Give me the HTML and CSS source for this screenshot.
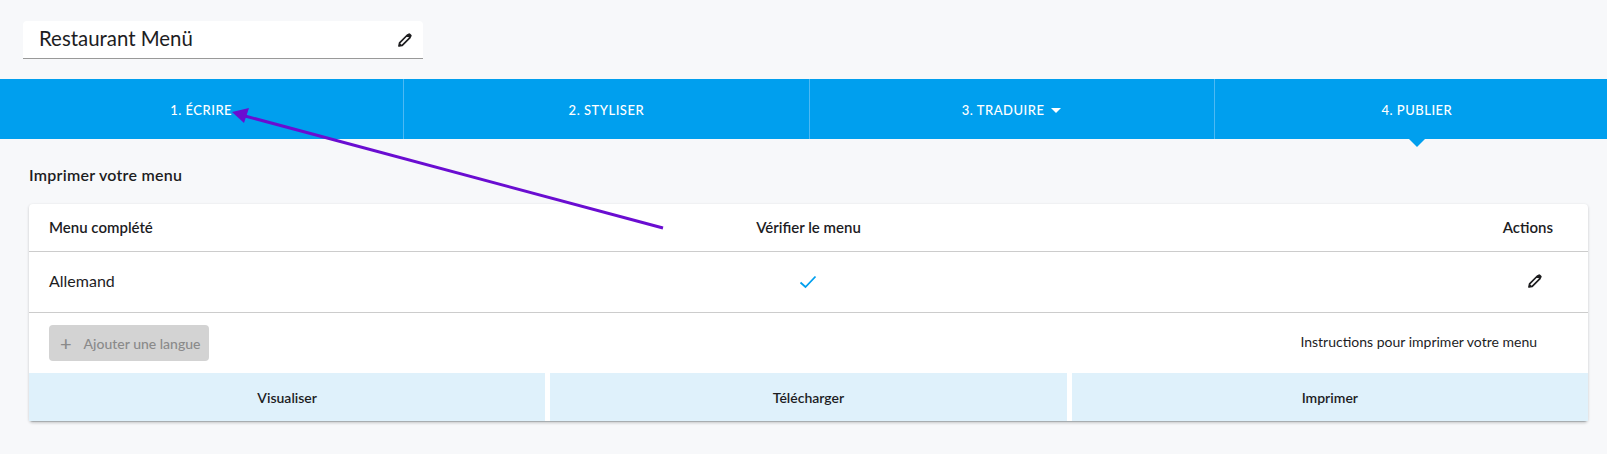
FILE: index.html
```html
<!DOCTYPE html>
<html lang="fr">
<head>
    <meta charset="UTF-8">
    <meta name="viewport" content="width=device-width, initial-scale=1.0">
    <title>Restaurant Menü</title>
    <link rel="stylesheet" href="styles.css">
</head>
<body>
    <div class="title-box">
        <span class="title-text">Restaurant Menü</span>
        <svg class="pencil" viewBox="0 0 14 14"><path d="M1 13l.6-3.2L9.4 2l2.6 2.6L4.2 12.4z" fill="#fff" stroke="#1d1d1f" stroke-width="1.7" stroke-linejoin="round"/><path d="M9.2 1.8l1-1a1.4 1.4 0 0 1 2 0l1 1a1.4 1.4 0 0 1 0 2l-1 1z" fill="#1d1d1f"/><path d="M.7 13.3l.7-3.6 2.9 2.9z" fill="#1d1d1f"/></svg>
    </div>

    <nav class="steps">
        <div class="step">1. ÉCRIRE</div>
        <div class="step">2. STYLISER</div>
        <div class="step">3. TRADUIRE<span class="caret"></span></div>
        <div class="step active">4. PUBLIER</div>
    </nav>

    <h2 class="section-title">Imprimer votre menu</h2>

    <div class="card">
        <div class="row row-head">
            <div class="col-left">Menu complété</div>
            <div class="col-mid">Vérifier le menu</div>
            <div class="col-right">Actions</div>
        </div>
        <div class="row row-lang">
            <div class="col-left">Allemand</div>
            <div class="col-mid">
                <svg class="check" viewBox="0 0 18 14"><path d="M1.5 7.5l5 4.5L16.5 1.5" fill="none" stroke="#009fee" stroke-width="1.8"/></svg>
            </div>
            <div class="col-right">
                <svg class="pencil" viewBox="0 0 14 14"><path d="M1 13l.6-3.2L9.4 2l2.6 2.6L4.2 12.4z" fill="#fff" stroke="#1d1d1f" stroke-width="1.7" stroke-linejoin="round"/><path d="M9.2 1.8l1-1a1.4 1.4 0 0 1 2 0l1 1a1.4 1.4 0 0 1 0 2l-1 1z" fill="#1d1d1f"/><path d="M.7 13.3l.7-3.6 2.9 2.9z" fill="#1d1d1f"/></svg>
            </div>
        </div>
        <div class="row row-tools">
            <button class="add-btn" disabled><span class="plus">+</span>Ajouter une langue</button>
            <span class="instructions">Instructions pour imprimer votre menu</span>
        </div>
        <div class="actions">
            <div class="action">Visualiser</div>
            <div class="action">Télécharger</div>
            <div class="action">Imprimer</div>
        </div>
    </div>

    <!-- annotation drawn over the page -->
    <svg class="annotation" width="700" height="240" viewBox="0 0 700 240">
        <path d="M663 228L245 116" stroke="#6a0dd1" stroke-width="3" fill="none"/>
        <path d="M232 112L249 108L244 123z" fill="#6a0dd1"/>
    </svg>
</body>
</html>
```

FILE: styles.css
```css
html, body {
    overflow: hidden;
}
body {
    margin: 0;
    height: 454px;
    background: #f7f8fa;
    color: #1d1d1f;
    font-family: 'Lato', 'Noto Sans', sans-serif;
    position: relative;
    padding-top: 21px;
    box-sizing: border-box;
}
.title-box {
    width: 400px;
    height: 38px;
    margin-left: 23px;
    padding: 0 11px 0 16px;
    box-sizing: border-box;
    display: flex;
    align-items: center;
    justify-content: space-between;
    background: #fff;
    border-bottom: 1px solid #999;
    border-radius: 4px 4px 0 0;
}
.title-text {
    font-size: 20.4px;
    margin-top: -4px;
}
.pencil {
    display: block;
    width: 14px;
    height: 14px;
}
.steps {
    display: flex;
    height: 60px;
    margin: 20px -12px 0 -1px;
    background: #009fee;
}
.step {
    flex: 1;
    display: flex;
    align-items: center;
    justify-content: center;
    position: relative;
    padding-top: 2px;
    box-sizing: border-box;
    color: #fff;
    font-size: 13px;
    letter-spacing: 0.5px;
    font-weight: 500;
    border-right: 1px solid #4db9f3;
}
.step:last-child {
    border-right: none;
}
.step.active::after {
    content: "";
    position: absolute;
    left: 50%;
    bottom: -8px;
    margin-left: -8px;
    border-left: 8px solid transparent;
    border-right: 8px solid transparent;
    border-top: 8px solid #009fee;
}
.caret {
    width: 0;
    height: 0;
    margin-left: 7px;
    border-left: 5px solid transparent;
    border-right: 5px solid transparent;
    border-top: 5px solid #fff;
}
.section-title {
    margin: 27px 0 0 29px;
    height: 38px;
    font-size: 16px;
    font-weight: 600;
    letter-spacing: 0.25px;
    line-height: 18px;
}
.card {
    width: 1559px;
    margin-left: 29px;
    background: #fff;
    border-radius: 4px;
    box-shadow: 0 1px 3px rgba(0, 0, 0, 0.2);
}
.row {
    display: grid;
    grid-template-columns: 1fr 1fr 1fr;
    align-items: center;
    padding: 0 20px;
    border-bottom: 1px solid #ccc;
}
.row-head {
    height: 45px;
    padding-bottom: 2px;
    font-size: 15px;
    font-weight: 600;
}
.row-lang {
    height: 60px;
    font-size: 16px;
}
.row-lang .col-left {
    margin-top: -4px;
}
.col-mid {
    display: flex;
    justify-content: center;
}
.col-right {
    display: flex;
    justify-content: flex-end;
    padding-right: 15px;
}
.row-lang .col-right {
    padding-right: 26px;
    margin-top: -3px;
}
.check {
    width: 18px;
    height: 14px;
}
.row-tools {
    display: flex;
    justify-content: space-between;
    height: 60px;
    border-bottom: none;
}
.add-btn {
    width: 160px;
    height: 36px;
    padding: 0 0 0 11px;
    display: flex;
    align-items: center;
    background: #d3d3d3;
    color: #8a8a8a;
    border: none;
    border-radius: 4px;
    font-family: inherit;
    font-size: 14px;
    font-weight: 500;
}
.plus {
    font-size: 20px;
    margin-right: 12px;
    line-height: 1;
}
.instructions {
    font-size: 14px;
    margin-right: 31px;
    margin-top: -3px;
}
.actions {
    display: flex;
    gap: 5px;
    height: 49px;
    border-bottom: 1px solid #a8adb0;
    border-radius: 0 0 4px 4px;
    box-sizing: border-box;
}
.action {
    flex: 1;
    display: flex;
    align-items: center;
    justify-content: center;
    background: #dff1fb;
    font-size: 14px;
    font-weight: 600;
}
.annotation {
    position: absolute;
    left: 0;
    top: 0;
    pointer-events: none;
}
```
